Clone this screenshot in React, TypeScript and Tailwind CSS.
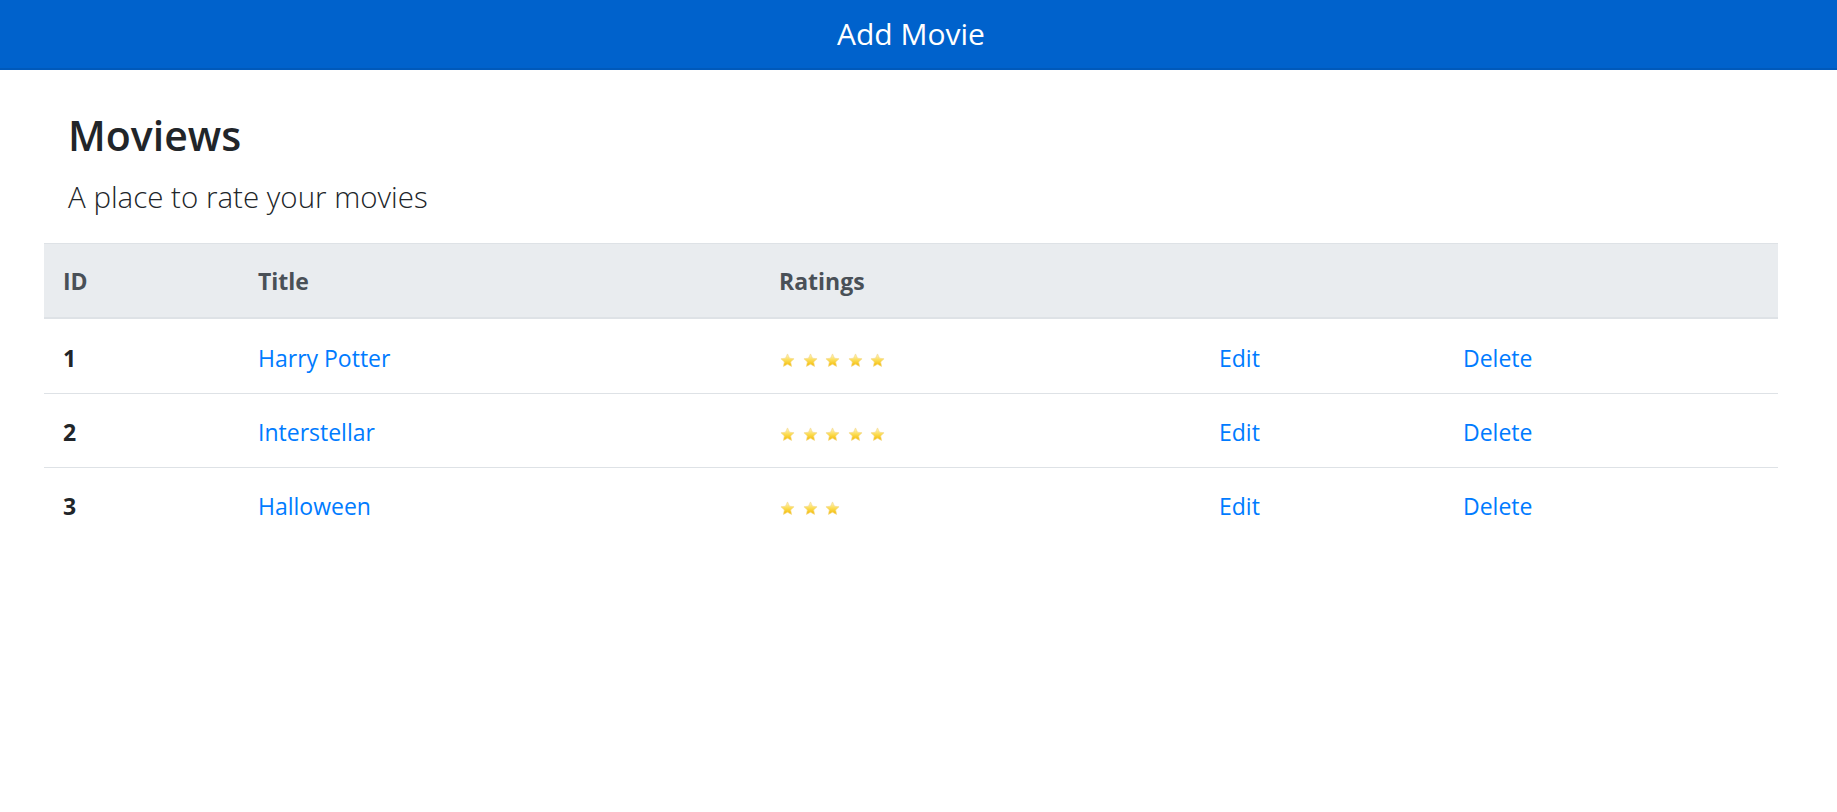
import React from "react";

type Movie = { id: number; title: string; rating: number };

const movies: Movie[] = [
  { id: 1, title: "Harry Potter", rating: 5 },
  { id: 2, title: "Interstellar", rating: 5 },
  { id: 3, title: "Halloween", rating: 3 },
];

const cols = "grid grid-cols-[195px_521px_440px_244px_1fr] items-center";

function Star() {
  return (
    <svg width="15" height="15" viewBox="0 0 24 24">
      <defs>
        <linearGradient id="starFill" x1="0" y1="0" x2="0" y2="1">
          <stop offset="0%" stopColor="#fff7c2" />
          <stop offset="55%" stopColor="#fbd94a" />
          <stop offset="100%" stopColor="#f2b700" />
        </linearGradient>
      </defs>
      <path
        d="M12 1.5l3.2 6.8 7.3.9-5.4 5 1.4 7.3L12 17.9l-6.5 3.6 1.4-7.3-5.4-5 7.3-.9z"
        fill="url(#starFill)"
        stroke="#f3d98a"
        strokeWidth="1"
        strokeLinejoin="round"
      />
    </svg>
  );
}

function Stars({ count }: { count: number }) {
  return (
    <div className="flex gap-[7.5px] mt-[4px]">
      {Array.from({ length: count }).map((_, i) => (
        <Star key={i} />
      ))}
    </div>
  );
}

export default function App() {
  return (
    <div className="min-h-screen bg-white" style={{ fontFamily: '"Open Sans", "Noto Sans", sans-serif' }}>
      {/* barra superior */}
      <header className="h-[70px] bg-[#0062cc] border-b-2 border-[#0059ba] flex items-center justify-center pr-[15px]">
        <span className="text-white text-[30px] leading-none font-normal">Add Movie</span>
      </header>

      <main className="pl-[44px] pr-[59px]">
        <div className="pl-[24px]">
          <h1 className="mt-[45px] text-[41px] leading-[40px] font-semibold text-[#212529]">Moviews</h1>
          <p className="mt-[28px] text-[29.5px] leading-[28px] font-light text-[#212529]">
            A place to rate your movies
          </p>
        </div>

        {/* tabla */}
        <div className="mt-[32px] text-[23px] text-[#212529]">
          <div className={`${cols} h-[76px] pt-[2px] bg-[#e9ecef] border-t border-b-2 border-[#dee2e6] font-bold text-[#495057]`}>
            <div className="pl-[19px]">ID</div>
            <div className="pl-[19px]">Title</div>
            <div className="pl-[19px]">Ratings</div>
            <div />
            <div />
          </div>
          {movies.map((m, i) => (
            <div
              key={m.id}
              className={`${cols} h-[74px] pt-[4px] ${i > 0 ? "border-t border-[#dee2e6]" : ""}`}
            >
              <div className="pl-[19px] font-bold">{m.id}</div>
              <div className="pl-[19px]">
                <a href="#" className="text-[#007bff]">{m.title}</a>
              </div>
              <div className="pl-[20px]">
                <Stars count={m.rating} />
              </div>
              <div className="pl-[19px]">
                <a href="#" className="text-[#007bff]">Edit</a>
              </div>
              <div className="pl-[19px]">
                <a href="#" className="text-[#007bff]">Delete</a>
              </div>
            </div>
          ))}
        </div>
      </main>
    </div>
  );
}
